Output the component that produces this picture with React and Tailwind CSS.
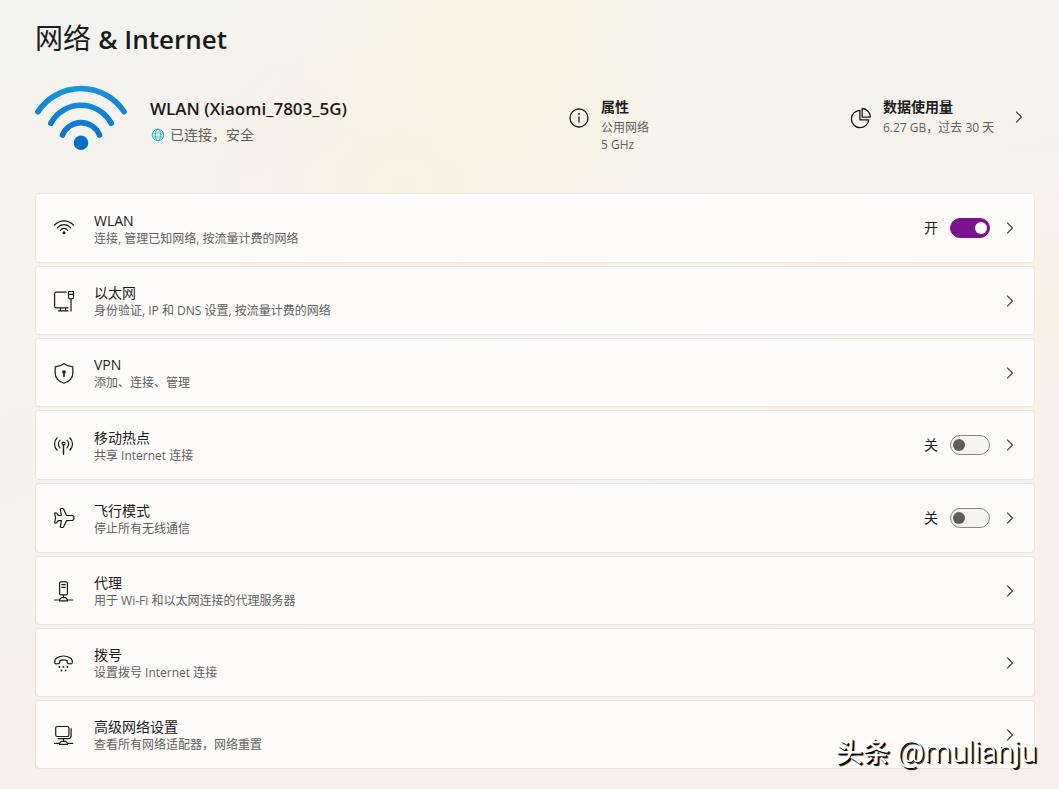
import React, { useState } from 'react';

function Icon({ children }) {
  return (
    <svg
      width="24"
      height="24"
      viewBox="0 0 24 24"
      fill="none"
      stroke="currentColor"
      strokeWidth="1.2"
      strokeLinecap="round"
      strokeLinejoin="round"
      className="shrink-0"
      aria-hidden="true"
    >
      {children}
    </svg>
  );
}

const icons = {
  wifi: (
    <Icon>
      <path d="M2.5 9.2C7.8 3.3 16.2 3.3 21.5 9.2" />
      <path d="M5.3 11.8c3.8-4.2 9.6-4.2 13.4 0" />
      <path d="M8.3 14.3c2.2-2.5 5.2-2.5 7.4 0" />
      <circle cx="12" cy="16.7" r="1.5" fill="currentColor" stroke="none" />
    </Icon>
  ),
  ethernet: (
    <Icon>
      <path d="M14 3.2H4.2a1.6 1.6 0 0 0-1.6 1.6v12.4a1.6 1.6 0 0 0 1.6 1.6H16" />
      <path d="M8.5 19v2.7M13.5 19v2.7M6.5 21.9H16" />
      <path d="M16.5 2.5h5v5.7a1.6 1.6 0 0 1-1.6 1.6h-1.8a1.6 1.6 0 0 1-1.6-1.6zM16.5 5.3h5M19 10v11.9" />
    </Icon>
  ),
  vpn: (
    <Icon>
      <path d="M12 2.8c2.6 2 5.2 2.8 8.8 3v6.4c0 4.6-3.2 8-8.8 10.1-5.6-2.1-8.8-5.5-8.8-10.1V5.8c3.6-.2 6.2-1 8.8-3z" />
      <circle cx="12" cy="11" r="1.8" fill="currentColor" stroke="none" />
      <path d="M12 11.5v4" strokeWidth="1.6" />
    </Icon>
  ),
  hotspot: (
    <Icon>
      <path d="M5.2 4.8c-3.6 3.5-3.6 8.9 0 12.4M17.8 4.8c3.6 3.5 3.6 8.9 0 12.4" />
      <path d="M8 7.2c-2.2 2.2-2.2 5.4 0 7.6M15 7.2c2.2 2.2 2.2 5.4 0 7.6" />
      <circle cx="11.5" cy="10.6" r="1.5" />
      <path d="M11.5 12.3v9" strokeWidth="1.4" />
    </Icon>
  ),
  plane: (
    <Icon>
      <path d="M9 2.5h1.6c.5 0 .9.3 1.1.7l2.9 6.2 5.2.1c1.3 0 2.2 1.1 2.2 2.5s-.9 2.5-2.2 2.5l-5.2.1-2.9 6.2c-.2.4-.6.7-1.1.7H9c-.5 0-.8-.4-.7-.9l1.1-6-3-.1-1.9 2.3c-.2.2-.4.3-.7.3h-.6c-.4 0-.6-.3-.5-.7l.9-4.4-.9-4.4c-.1-.4.1-.7.5-.7h.6c.3 0 .5.1.7.3l1.9 2.3 3-.1-1.1-6c-.1-.5.2-.9.7-.9z" />
    </Icon>
  ),
  proxy: (
    <Icon>
      <rect x="7.6" y="2.9" width="7.8" height="13" rx="1.2" />
      <path d="M9.8 5.7h3.4M9.8 8.3h3.4M11.5 16v2.4" />
      <path d="M2.5 21h4.8l2-2.3h4.4l2 2.3h5M7.5 21.9h8" />
    </Icon>
  ),
  dialup: (
    <Icon>
      <path d="M2.7 11.5C2 7.3 6.7 5 11.5 5s9.5 2.3 8.8 6.5c-.1.9-.8 1.5-1.7 1.4l-2-.3c-.8-.1-1.3-.7-1.4-1.5l-.1-1.5c-2.2-.8-5-.8-7.2 0l-.1 1.5c-.1.8-.6 1.4-1.4 1.5l-2 .3c-.9.1-1.6-.5-1.7-1.4z" />
      <path d="M7.5 16h.01M11.5 16h.01M15.5 16h.01M9.5 19.5h.01M13.5 19.5h.01" strokeWidth="1.8" />
    </Icon>
  ),
  advanced: (
    <Icon>
      <rect x="3.7" y="3.5" width="13.2" height="10" rx="1.5" />
      <path d="M19.1 5.7v7.4a2.5 2.5 0 0 1-2.5 2.5H6.2M11.5 16v2" />
      <path d="M2.5 20.4h4.8l2-2.1h4.4l2 2.1h5M7.5 21.4h8" />
    </Icon>
  ),
};

const rows = [
  { icon: 'wifi', title: 'WLAN', desc: '连接, 管理已知网络, 按流量计费的网络', on: true },
  { icon: 'ethernet', title: '以太网', desc: '身份验证, IP 和 DNS 设置, 按流量计费的网络' },
  { icon: 'vpn', title: 'VPN', desc: '添加、连接、管理' },
  { icon: 'hotspot', title: '移动热点', desc: '共享 Internet 连接', on: false },
  { icon: 'plane', title: '飞行模式', desc: '停止所有无线通信', on: false },
  { icon: 'proxy', title: '代理', desc: '用于 Wi-Fi 和以太网连接的代理服务器' },
  { icon: 'dialup', title: '拨号', desc: '设置拨号 Internet 连接' },
  { icon: 'advanced', title: '高级网络设置', desc: '查看所有网络适配器，网络重置' },
];

function Chevron() {
  return (
    <svg width="8" height="14" viewBox="0 0 8 14" fill="none" stroke="#333" strokeWidth="1.1" aria-hidden="true">
      <path d="M1.2 1.7 6.5 7l-5.3 5.3" />
    </svg>
  );
}

function Toggle({ name, initial }) {
  const [on, setOn] = useState(initial);
  return (
    <label className="flex items-center gap-3 text-sm text-[#1b1b1b]">
      <span>{on ? '开' : '关'}</span>
      <input
        type="checkbox"
        role="switch"
        aria-label={name}
        checked={on}
        onChange={() => setOn(!on)}
        className="flex h-5 w-10 appearance-none items-center rounded-full border border-[#868686] bg-[#f5f4f3] px-0.5 before:size-3 before:rounded-full before:bg-[#5d5d5d] checked:justify-end checked:border-[#7b138c] checked:bg-[#7b138c] checked:before:bg-white"
      />
    </label>
  );
}

function SettingRow({ row }) {
  const hasToggle = row.on !== undefined;
  return (
    <li
      className={`flex items-center rounded border border-[#ebe4dc] bg-[#fdfcfa] pr-5 pl-4 ${hasToggle ? 'h-[70px]' : 'h-[69px]'}`}
    >
      <a href="#" className="flex flex-1 items-center gap-[18px]">
        {icons[row.icon]}
        <span className="flex flex-col pt-0.5">
          <span className="text-sm leading-[18px] text-[#1b1b1b]">{row.title}</span>
          <span className="text-xs leading-[17px] text-[#606060]">{row.desc}</span>
        </span>
      </a>
      {hasToggle && <Toggle name={row.title} initial={row.on} />}
      <button className="ml-4 flex w-2 justify-center" aria-label={row.title}>
        <Chevron />
      </button>
    </li>
  );
}

function NetworkLogo() {
  return (
    <svg width="92" height="66" viewBox="0 0 92 66" fill="none" className="shrink-0" aria-hidden="true">
      <defs>
        <linearGradient id="signal" x1="0" y1="0" x2="0" y2="66" gradientUnits="userSpaceOnUse">
          <stop offset="0" stopColor="#1997de" />
          <stop offset="1" stopColor="#0a68c6" />
        </linearGradient>
      </defs>
      <g stroke="url(#signal)" strokeWidth="5.6" strokeLinecap="round">
        <path d="M2.9 26.7a51.6 51.6 0 0 1 86.2 0" />
        <path d="M15.8 38.3a34.3 34.3 0 0 1 60.4 0" />
        <path d="M27.5 50a20 20 0 0 1 37 0" />
      </g>
      <circle cx="46" cy="57.8" r="7.3" fill="url(#signal)" />
    </svg>
  );
}

export default function App() {
  return (
    <div className="relative min-h-screen bg-[radial-gradient(ellipse_at_48%_0%,#f8f4e3_0%,#f8f4e300_32%),radial-gradient(ellipse_at_38%_24%,#f9f1e5_0%,#f9f1e500_28%),radial-gradient(ellipse_at_100%_40%,#f9f1e6_0%,#f9f1e600_26%),linear-gradient(165deg,#f3f3ef_0%,#f5f3ee_30%,#f6f1ed_65%,#f9eeec_100%)] pt-5 pr-6 pb-5 pl-[35px] font-['Open_Sans','Noto_Sans_CJK_SC',sans-serif] text-[#1b1b1b]">
      <h1 className="text-[28px] leading-9">
        网络 <span className="text-[26px] font-semibold">&amp; Internet</span>
      </h1>

      <header className="mt-7 flex items-start">
        <div className="flex flex-1 items-start gap-[23px]">
          <NetworkLogo />
          <div className="pt-3">
            <h2 className="text-[17px] leading-6 font-semibold">WLAN (Xiaomi_7803_5G)</h2>
            <p className="mt-1 flex items-center gap-[5px] text-sm leading-5 text-[#5f5f5c]">
              <svg width="14" height="14" viewBox="0 0 14 14" fill="none" stroke="#35b3cf" className="ml-px" aria-hidden="true">
                <circle cx="7" cy="7" r="5.8" fill="#d8f2ee" />
                <ellipse cx="7" cy="7" rx="2.7" ry="5.8" />
                <path d="M1.7 5h10.6M1.7 9h10.6" stroke="#4fc3b4" />
              </svg>
              已连接，安全
            </p>
          </div>
        </div>

        <a href="#" className="flex w-[282px] items-start gap-3 pt-3">
          <svg width="20" height="20" viewBox="0 0 20 20" fill="none" stroke="currentColor" strokeWidth="1.3" className="mt-[11px]" aria-hidden="true">
            <circle cx="10" cy="10" r="9" />
            <path d="M10 8.5v6" />
            <circle cx="10" cy="6" r="0.9" fill="currentColor" stroke="none" />
          </svg>
          <span className="flex flex-col">
            <span className="mb-0.5 text-sm leading-5 font-bold">属性</span>
            <span className="text-xs leading-[18px] text-[#62615d]">公用网络</span>
            <span className="text-xs leading-4 text-[#62615d]">5 GHz</span>
          </span>
        </a>

        <a href="#" className="flex w-[184px] items-start gap-3 pt-3">
          <svg width="20" height="22" viewBox="0 0 20 22" fill="none" stroke="currentColor" strokeWidth="1.3" strokeLinejoin="round" className="mt-2.5" aria-hidden="true">
            <path d="M8.9 3.3a8.7 8.7 0 1 0 8.9 9.5H8.9z" />
            <path d="M11.2 1.5a8.4 8.4 0 0 1 8.1 8.6h-8.1z" />
          </svg>
          <span className="flex flex-1 flex-col whitespace-nowrap">
            <span className="mb-0.5 text-sm leading-5 font-bold">数据使用量</span>
            <span className="text-xs leading-[18px] text-[#62615d]">6.27 GB，过去 30 天</span>
          </span>
          <span className="mt-[13px] mr-3">
            <Chevron />
          </span>
        </a>
      </header>

      <ul className="mt-10 flex flex-col gap-[3px]">
        {rows.map((row) => (
          <SettingRow key={row.title} row={row} />
        ))}
      </ul>

      <div className="pointer-events-none absolute right-[22px] bottom-4 font-['Roboto','Noto_Sans_CJK_SC',sans-serif] text-[30px] leading-10 font-light text-white [text-shadow:1px_1px_0_#000,2px_2px_1px_#000]">
        <span className="text-[27px] font-medium">头条</span> @mulianju
      </div>
    </div>
  );
}
